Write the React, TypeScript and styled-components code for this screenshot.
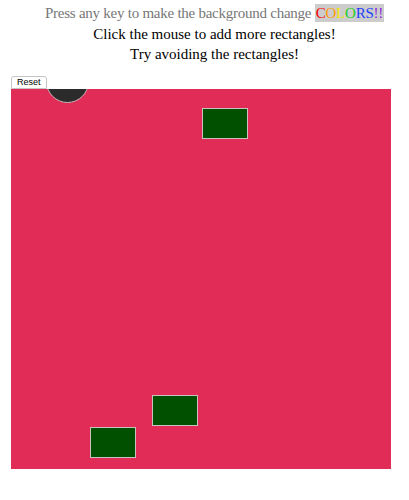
import React from "react";
import styled, { createGlobalStyle } from "styled-components";

const Global = createGlobalStyle`
  html, body { margin: 0; padding: 0; background: #fff; }
  body { margin: 0 8px; font-family: "Liberation Serif", serif; }
`;

const Page = styled.div`
  display: flex;
  flex-direction: column;
  padding-left: 3px;
`;

const Header = styled.div`
  padding-left: 17px;
  padding-top: 3px;
  text-align: center;
  font-family: "Liberation Serif", serif;
  font-size: 15px;
  white-space: nowrap;
`;

const Line = styled.p<{ $muted?: boolean }>`
  margin: 0;
  line-height: 20.5px;
  color: ${(p) => (p.$muted ? "#777" : "#000")};
  letter-spacing: ${(p) => (p.$muted ? "-0.25px" : "0")};
`;

const Colors = styled.span`
  background: #cccccc;
  padding: 1px 1px;
`;

const Letter = styled.span<{ $c: string }>`
  color: ${(p) => p.$c};
`;

const ResetButton = styled.button`
  align-self: flex-start;
  margin-top: 11px;
  height: 13px;
  padding: 0 5px;
  font-family: "Liberation Sans", Arial, sans-serif;
  font-size: 9px;
  line-height: 11px;
  color: #000;
  background: #fff;
  border: 1px solid #c4c4c4;
  border-radius: 3px 3px 0 0;
`;

const Canvas = styled.div`
  position: relative;
  width: 380px;
  height: 380px;
  background: #e02c56;
  overflow: hidden;
`;

const Ball = styled.div`
  position: absolute;
  width: 43px;
  height: 43px;
  border-radius: 50%;
  background: #2b2b2b;
  border: 1px solid #c9b4b8;
  box-sizing: border-box;
`;

const Block = styled.div`
  position: absolute;
  width: 46px;
  height: 31px;
  box-sizing: border-box;
  background: #005000;
  border: 1px solid #c9c3bf;
`;

const blocks = [
  { x: 191, y: 19 },
  { x: 141, y: 306 },
  { x: 79, y: 338 },
];

const letters: [string, string][] = [
  ["C", "#ff0000"],
  ["O", "#ff9900"],
  ["L", "#f3e600"],
  ["O", "#22cc22"],
  ["R", "#1f3cff"],
  ["S", "#2040ff"],
  ["!!", "#8a2be2"],
];

export default function App() {
  return (
    <>
      <Global />
      <Page>
        <Header>
          <Line $muted>
            Press any key to make the background change{" "}
            <Colors>
              {letters.map(([t, c], i) => (
                <Letter key={i} $c={c}>
                  {t}
                </Letter>
              ))}
            </Colors>
          </Line>
          <Line>Click the mouse to add more rectangles!</Line>
          <Line>Try avoiding the rectangles!</Line>
        </Header>
        <ResetButton>Reset</ResetButton>
        <Canvas>
          <Ball style={{ left: 35, top: -29 }} />
          {blocks.map((b, i) => (
            <Block key={i} style={{ left: b.x, top: b.y }} />
          ))}
        </Canvas>
      </Page>
    </>
  );
}
